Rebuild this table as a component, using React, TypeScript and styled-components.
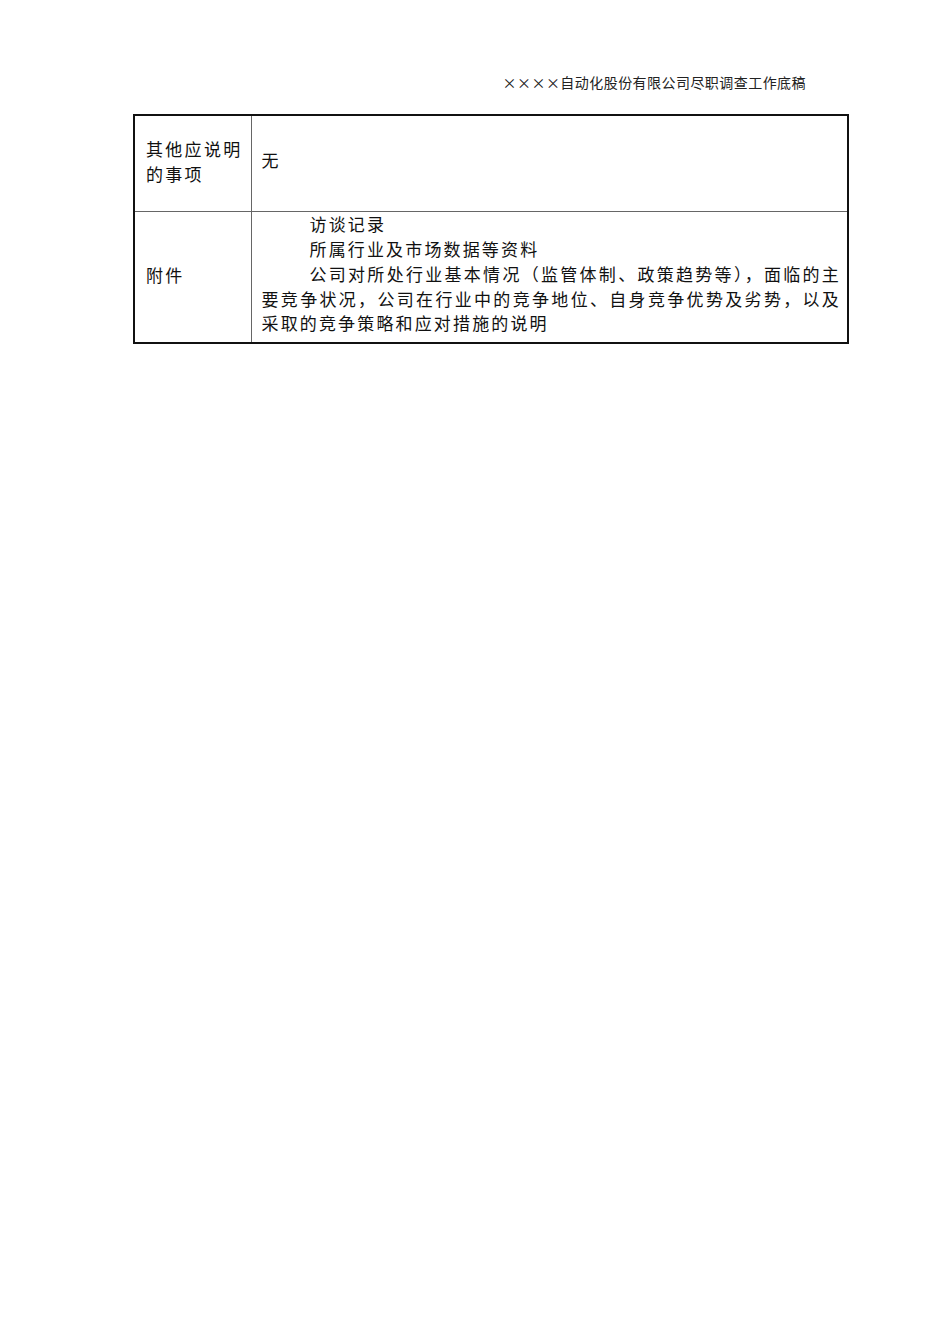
import styled, { createGlobalStyle } from "styled-components";

const GlobalStyle = createGlobalStyle`
    html, body {
        margin: 0;
        padding: 0;
        background: #ffffff;
    }
    body {
        font-family: "Noto Sans CJK SC", "Liberation Serif", sans-serif;
        color: #111111;
    }
`

const Page = styled.div`
    width: 950px;
    min-height: 1344px;
    padding: 72px 0 0 133px;
    box-sizing: border-box;
`

const Header = styled.div`
    width: 673px;
    text-align: right;
    font-size: 14px;
    letter-spacing: 0.45px;
    line-height: 20px;
    color: #222222;
    margin-bottom: 22px;
`

const Table = styled.table`
    width: 716px;
    border-collapse: collapse;
    border: 2px solid #111111;
    table-layout: fixed;
`

const LabelCell = styled.td`
    width: 117px;
    border: 1px solid #666666;
    padding: 0 4px 5px 11px;
    vertical-align: middle;
    font-size: 17px;
    letter-spacing: 2.3px;
    line-height: 25px;
    box-sizing: border-box;
`

const ValueCell = styled.td<{ $height: number }>`
    height: ${p => p.$height}px;
    border: 1px solid #666666;
    padding: 0 6px 5px 10px;
    vertical-align: middle;
    font-size: 17px;
    letter-spacing: 2.15px;
    line-height: 24.7px;
    text-align: justify;
    box-sizing: border-box;
`

const Para = styled.p`
    margin: 0;
    text-indent: 48px;
`

const attachments = [
    "访谈记录",
    "所属行业及市场数据等资料",
    "公司对所处行业基本情况（监管体制、政策趋势等），面临的主要竞争状况，公司在行业中的竞争地位、自身竞争优势及劣势，以及采取的竞争策略和应对措施的说明",
]

export default function App() {
    return <>
        <GlobalStyle />
        <Page>
            <Header>××××自动化股份有限公司尽职调查工作底稿</Header>
            <Table>
                <tbody>
                    <tr>
                        <LabelCell>其他应说明的事项</LabelCell>
                        <ValueCell $height={96}>无</ValueCell>
                    </tr>
                    <tr>
                        <LabelCell>附件</LabelCell>
                        <ValueCell $height={132}>
                            {attachments.map(a => <Para key={a}>{a}</Para>)}
                        </ValueCell>
                    </tr>
                </tbody>
            </Table>
        </Page>
    </>
}
